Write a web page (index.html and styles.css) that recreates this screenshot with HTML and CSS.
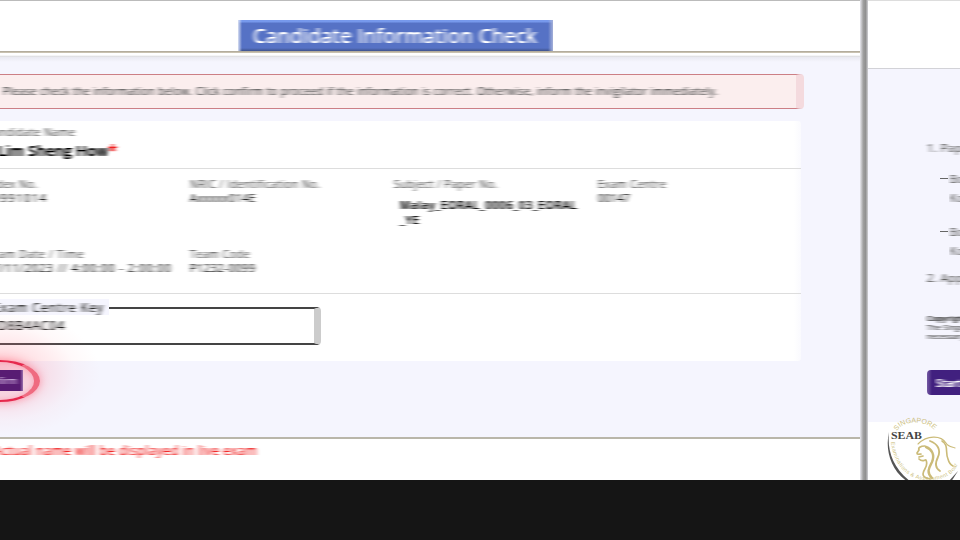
FILE: index.html
```html
<!DOCTYPE html>
<html lang="en">
<head>
<meta charset="utf-8">
<title>Candidate Information Check</title>
<link rel="stylesheet" href="styles.css">
</head>
<body>
<svg class="defs" aria-hidden="true"><defs><filter id="sweep" x="-5%" y="-10%" width="110%" height="120%" color-interpolation-filters="sRGB"><feGaussianBlur stdDeviation="2 0.3"/><feComponentTransfer><feFuncA type="linear" slope="1.3"/></feComponentTransfer></filter></defs></svg>
<div class="stage">
  <main class="window">
    <header class="top"><h1 class="title"><span class="soft">Candidate Information Check</span></h1></header>
    <div class="body">
      <div class="alert"><span class="soft">Please check the information below. Click confirm to proceed if the information is correct. Otherwise, inform the invigilator immediately.</span></div>
      <section class="card">
        <div class="person">
          <div class="label name-label soft">Candidate Name</div>
          <div class="name soft">Lim Sheng How<span class="star">*</span></div>
        </div>
        <div class="details">
          <div class="cell"><div class="label soft">Index No.</div><div class="value v-index soft">9991014</div></div>
          <div class="cell"><div class="label soft">NRIC / Identification No.</div><div class="value soft">Axxxxx014E</div></div>
          <div class="cell"><div class="label soft">Subject / Paper No.</div><div class="paper soft">Malay_EORAL_0006_03_EORAL<br>_YE</div></div>
          <div class="cell"><div class="label soft">Exam Centre</div><div class="value v-centre soft">00147</div></div>
          <div class="cell"><div class="label l-date soft">Exam Date / Time</div><div class="value v-date soft">17/11/2023 // 4:00:00 - 2:00:00</div></div>
          <div class="cell"><div class="label soft">Team Code</div><div class="value soft">P1232-0099</div></div>
        </div>
        <div class="key">
          <div class="field"><div class="legend"><span class="soft">Exam Centre Key</span></div><div class="code soft">D8B4AC04</div></div>
        </div>
      </section>
      <div class="actions"><div class="halo"></div><div class="ring"></div><button class="confirm"><span class="soft">Confirm</span></button></div>
    </div>
    <footer class="note"><span class="soft">*Actual name will be displayed in live exam</span></footer>
  </main>
  <div class="divider"></div>
  <aside class="side">
    <div class="side-head"></div>
    <div class="side-body">
      <div class="rule soft">1. Paper</div>
      <div class="bullet b1"><i></i><span class="soft">Both</span></div>
      <div class="bullet b2"><i></i><span class="soft">Ko</span></div>
      <div class="bullet b1 second"><i></i><span class="soft">Both</span></div>
      <div class="bullet b2"><i></i><span class="soft">Ko</span></div>
      <div class="rule r2 soft">2. Approx</div>
      <div class="legal soft"><b>Copyright</b><br>The Singapore<br>necessary</div>
      <button class="start"><span class="soft">Start</span></button>
    </div>
    <div class="brand">
      <svg class="logo" viewBox="880 421 80 59" width="80" height="59">
        <defs>
          <path id="arcTop" d="M897 430C903 419 927 418 936 431"/>
          <path id="arcLow" d="M891 441C893 461 905 477 924 479C942 480 955 474 958 462"/>
        </defs>
        <text class="gold t1"><textPath href="#arcTop" textLength="42">SINGAPORE</textPath></text>
        <text class="gold t2"><textPath href="#arcLow" textLength="98">Examinations &amp; Assessment Board</textPath></text>
        <path class="ink" d="M889 431C885 448 890 469 908 481L911 481C893 467 887 450 889 431Z"/>
        <path class="ink" d="M958 470L948 481L951 481Z"/>
        <text class="seab" x="891" y="438" textLength="31" lengthAdjust="spacingAndGlyphs">SEAB</text>
        <g class="lion">
          <path d="M925 445C920 445 918 447 919 449L917 452C917 454 920 453 921 453M919 456L923 455M919 458C923 462 925 458 926 459C929 466 923 468 923 473C923 477 927 477 930 478" stroke-width="1.7"/>
          <path d="M918 443C927 434 941 434 946 442C948 446 953 446 955 447" stroke-width="1.1"/>
          <path d="M926 446C932 448 935 454 932 461C929 467 926 471 932 477" stroke-width="2.4"/>
          <path d="M930 440C938 443 941 449 938 456C935 462 935 467 940 470" stroke-width="1.8"/>
          <path d="M942 440C949 444 945 452 948 458C949 462 951 464 953 465" stroke-width="1.6"/>
        </g>
      </svg>
    </div>
  </aside>
</div>
</body>
</html>
```

FILE: styles.css
```css
* { box-sizing: border-box; }
body { margin: 0; width: 960px; height: 540px; overflow: hidden; background: #151515; font-family: "Open Sans", "Noto Sans", sans-serif; }
.defs { position: absolute; width: 0; height: 0; }
.soft { filter: url(#sweep); white-space: nowrap; }
.stage { display: flex; height: 480px; overflow: hidden; background: #fff; }
.window { flex: none; width: 860px; display: flex; flex-direction: column; overflow: hidden; border-top: 1px solid #bbb; }
.divider { flex: none; width: 8px; background: linear-gradient(90deg, #e8e8ee, #a0a0a0 40%, #909090 70%, #d0d0d4); }
.top { height: 56px; padding: 19px 0 0 238px; background: linear-gradient(#fff 50px, #aaa393 50px, #d3cbb9 52px, #fff 52px, #fff 54px, #d6d6da 56px); }
.title { display: flex; align-items: center; width: 315px; height: 31px; margin: 0; padding: 0 15px; font-size: 20px; font-weight: 400; letter-spacing: .43px; color: #fff; background: linear-gradient(90deg, #d8dff2, transparent 4px, transparent 310px, #a4b0d8), linear-gradient(#7799ec, #7799ec 2px, #5672c5 3px, #5672c5 28px, #3e528c); }
.body { height: 381px; background: linear-gradient(#e9e9f0, #f5f5fe 5px); padding-top: 17px; }
.alert { display: flex; align-items: center; width: 804px; height: 35px; padding-left: 3px; border: 1px solid #cc7f85; border-left: 0; border-radius: 0 4px 4px 0; border-right: 8px solid #f4dade; background: #fbeeee; font-size: 10.5px; letter-spacing: .37px; color: #555; }
.card { width: 801px; height: 240px; margin-top: 12px; background: linear-gradient(90deg, #fff 794px, #fafafe); border-radius: 0 3px 3px 0; }
.person { height: 48px; padding-top: 4px; border-bottom: 1px solid #ddd; }
.label { height: 14px; line-height: 14px; font-size: 10.5px; letter-spacing: .53px; color: #666; }
.name-label { margin-left: -14px; }
.name { height: 22px; margin: 1px 0 0 -2px; line-height: 22px; font-size: 14.5px; font-weight: 600; letter-spacing: .2px; color: #000; }
.star { font-size: 16px; line-height: 10px; color: #ee2222; }
.details { display: grid; grid-template-columns: repeat(4, 204px); grid-template-rows: 70px 46px; height: 125px; margin-left: -14px; padding-top: 8px; border-bottom: 1px solid #ddd; }
.l-date { letter-spacing: .75px; }
.value { height: 14px; line-height: 14px; font-size: 10.5px; letter-spacing: .8px; color: #333; }
.v-index { padding-left: 7px; letter-spacing: 1.8px; }
.v-centre { letter-spacing: .4px; }
.v-date { letter-spacing: 1.2px; }
.paper { margin: 6px 0 0 6px; line-height: 15px; font-size: 11px; font-weight: 600; letter-spacing: .75px; color: #111; }
.key { padding-top: 13px; }
.field { width: 321px; height: 38px; border: solid #444; border-width: 2px 7px 2px 0; border-right-color: #ccc; border-radius: 0 4px 4px 0; }
.legend { width: 109px; height: 16px; margin-top: -10px; padding-left: 1px; line-height: 17px; background: #f5f5fe; font-size: 12px; letter-spacing: 1.1px; color: #333; text-indent: -8px; }
.code { margin: 3px 0 0 -2px; line-height: 16px; font-size: 12px; letter-spacing: 1px; color: #222; }
.actions { position: relative; display: flex; margin: 9px 0 0 -34px; }
.confirm { position: relative; width: 57px; height: 21px; padding: 0 6px 0 0; text-align: right; border: 0; background: linear-gradient(90deg, #581c73 54px, #9a70ad); color: #d9bce6; font: 9.5px "Open Sans", sans-serif; }
.ring { position: absolute; left: -6px; top: -10px; width: 80px; height: 42px; border: 2px solid #e6294d; border-right-width: 6px; border-right-color: #ef6b80; border-radius: 50%; box-shadow: 0 0 9px rgba(255,70,95,.5), inset 0 0 7px rgba(255,70,95,.4); }
.halo { position: absolute; left: -66px; top: -61px; width: 200px; height: 128px; background: radial-gradient(closest-side, rgba(255,90,110,.36), rgba(255,120,140,.2) 40%, rgba(255,150,160,.06) 75%, rgba(255,150,160,0)); }
.note { height: 43px; border-top: 2px solid #b9b6aa; background: #fff; color: #f02c2c; font-size: 12.5px; letter-spacing: .48px; line-height: 23px; text-indent: -14px; }
.side { width: 92px; overflow: hidden; border-top: 1px solid #ddd; background: #f5f5fe; }
.side-head { height: 68px; background: #fff; border-bottom: 1px solid #d2d2d7; }
.side-body { height: 353px; padding: 71px 0 0 59px; color: #666; font-size: 11.5px; letter-spacing: .4px; }
.rule { height: 16px; line-height: 16px; }
.bullet { display: flex; align-items: center; height: 16px; padding-left: 13px; font-size: 11px; }
.bullet i { flex: none; width: 8px; height: 1px; margin-right: 2px; background: #666; }
.b1 { margin-top: 14px; }
.b2 { margin-top: 3px; }
.b2 i { background: none; }
.second { margin-top: 18px; }
.r2 { margin-top: 12px; }
.legal { height: 28px; margin-top: 28px; font-size: 7.5px; line-height: 9px; color: #444; }
.start { display: block; width: 60px; height: 25px; margin-top: 28px; padding: 0 0 0 9px; border: 0; border-radius: 4px; text-align: left; background: linear-gradient(90deg, #7459a3, #41207f 5px); color: #fff; font: 600 11px "Open Sans", sans-serif; }
.brand { position: relative; height: 59px; padding-left: 12px; background: #fff; }
.logo { display: block; overflow: visible; }
.gold { fill: #cdbf80; font-family: "Liberation Sans", sans-serif; }
.t1 { font-size: 7px; }
.t2 { font-size: 5.5px; }
.ink { fill: #555; }
.seab { fill: #444; font: bold 10px "Liberation Serif", serif; }
.lion { fill: none; stroke: #cbbb78; stroke-linecap: round; }
```
